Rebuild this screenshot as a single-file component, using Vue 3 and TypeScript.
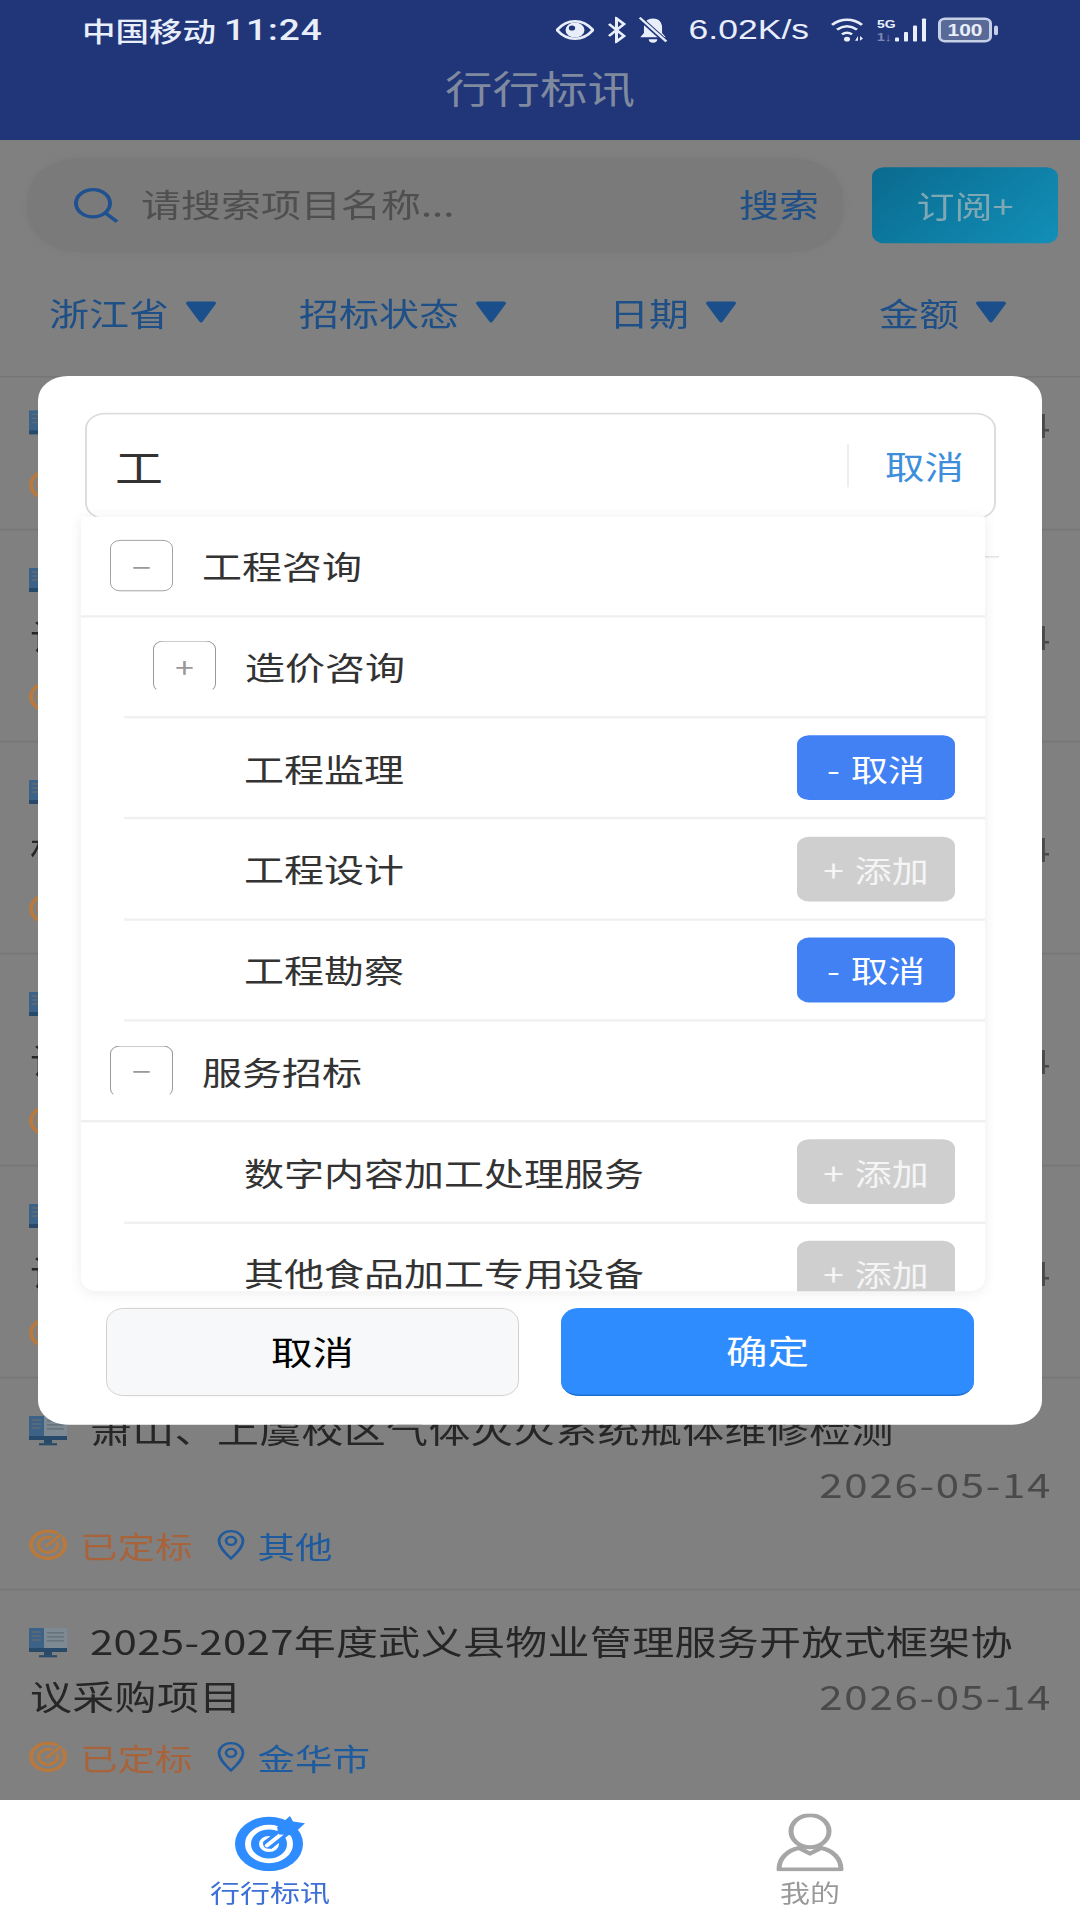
<template>
  <div class="viewport">
    <div class="screen">
      <header class="top">
        <div class="status">
          <span class="carrier">中国移动</span>
          <span class="clock">11:24</span>
          <div class="status-right">
            <svg class="ic-eye" viewBox="0 0 38 25">
              <path d="M1 12.500C7 4 13 1.500 19 1.500S31 4 37 12.500C31 21 25 23.500 19 23.500S7 21 1 12.500Z" fill="none" stroke="#e8eefa" stroke-width="3" />
              <circle cx="19" cy="12.500" r="9.500" fill="#e8eefa" />
              <circle cx="16" cy="10" r="3.200" fill="#213579" />
            </svg>
            <svg class="ic-bt" viewBox="0 0 21 33">
              <path d="M3 9l15 15-7.500 7V2L18 9 3 24" fill="none" stroke="#e8eefa" stroke-width="3" />
            </svg>
            <svg class="ic-bell" viewBox="0 0 28 31">
              <path d="M14 2c6 0 8.500 5 8.500 10v7l3.500 5H2l3.500-5v-7C5.500 7 8 2 14 2Z" fill="#e8eefa" />
              <path d="M10 26.500h8a4 4 0 0 1-8 0Z" fill="#e8eefa" />
              <path d="M2 2l24 27" stroke="#213579" stroke-width="5" />
              <path d="M1.500 1l25 28" stroke="#e8eefa" stroke-width="2.400" />
            </svg>
            <span class="speed">6.02K/s</span>
            <svg class="ic-wifi" viewBox="0 0 36 31">
              <path d="M1 9C10 0.500 22 0.500 31 9" fill="none" stroke="#e8eefa" stroke-width="3" />
              <path d="M6 15c6.500-5.500 13.500-5.500 20 0" fill="none" stroke="#e8eefa" stroke-width="3" />
              <path d="M11 21c3.500-3 6.500-3 10 0" fill="none" stroke="#e8eefa" stroke-width="3" />
              <circle cx="16" cy="27" r="3" fill="#e8eefa" />
              <path d="M24 29l3-6v6Zm5-6l3 3-3 3Z" fill="#e8eefa" />
            </svg>
            <div class="net">
              <span class="net-5g">5G</span>
              <span class="net-dim">1↓</span>
            </div>
            <svg class="ic-bars" viewBox="0 0 32 31">
              <rect x="0" y="25" width="4" height="5" rx="1" fill="#e8eefa" />
              <rect x="9" y="18" width="4" height="12" rx="1" fill="#e8eefa" />
              <rect x="18" y="10" width="4" height="20" rx="1" fill="#e8eefa" />
              <rect x="27" y="1" width="4" height="29" rx="1" fill="#e8eefa" />
            </svg>
            <div class="battery"><span>100</span></div>
            <i class="battery-nub"></i>
          </div>
        </div>
        <h1 class="title">行行标讯</h1>
      </header>

      <div class="search-row">
        <div class="search">
          <svg class="ic-search" viewBox="0 0 46 44">
            <circle cx="20" cy="19" r="17" fill="none" stroke="#1f5090" stroke-width="4" />
            <path d="M32 31l12 11" stroke="#1f5090" stroke-width="4" />
          </svg>
          <span class="placeholder">请搜索项目名称...</span>
          <span class="search-btn">搜索</span>
        </div>
        <div class="subscribe">订阅+</div>
      </div>

      <div class="filters">
        <div v-for="f in filters" :key="f" class="filter">
          <span>{{ f }}</span>
          <svg class="ic-tri" viewBox="0 0 32 28">
            <path d="M3 3h26L16 25Z" fill="#1a4f8c" stroke="#1a4f8c" stroke-width="4" stroke-linejoin="round" />
          </svg>
        </div>
      </div>

      <div class="list">
        <div v-for="(it, i) in items" :key="i" class="item">
          <div class="item-title">
            <svg class="ic-monitor" viewBox="0 0 38 38">
              <rect x="0" y="1" width="38" height="26" rx="1" fill="#7d8a94" />
              <rect x="0" y="1" width="15" height="26" fill="#3d6288" />
              <path d="M3 6h9M3 11h9M3 16h9M18 7h17M18 12h17M18 17h17" stroke="#5f6c76" stroke-width="1.600" />
              <rect x="0" y="26" width="38" height="5" fill="#27496a" />
              <rect x="15" y="31" width="8" height="4" fill="#27496a" />
              <rect x="10" y="35" width="18" height="3" fill="#27496a" />
            </svg>
            <span>{{ it.title }}</span>
            <span class="date">{{ it.date }}</span>
          </div>
          <div class="tags">
            <svg class="ic-target" viewBox="0 0 38 38">
              <circle cx="19" cy="19" r="17" fill="none" stroke="#b9793c" stroke-width="4" />
              <circle cx="19" cy="19" r="9.500" fill="none" stroke="#b9793c" stroke-width="3.400" />
              <path d="M19 19L36 2" stroke="#808080" stroke-width="7" />
              <path d="M17 21L32 6" stroke="#b9793c" stroke-width="3.400" />
            </svg>
            <span class="state">{{ it.state }}</span>
            <svg class="ic-pin" viewBox="0 0 28 38">
              <path d="M14 36C6 27 2 21 2 14a12 12 0 0 1 24 0c0 7-4 13-12 22Z" fill="none" stroke="#1f5a9e" stroke-width="2.800" />
              <circle cx="14" cy="14" r="5" fill="none" stroke="#1f5a9e" stroke-width="2.800" />
            </svg>
            <span class="city">{{ it.city }}</span>
          </div>
        </div>
      </div>

      <nav class="tabs">
        <div class="tab active">
          <svg class="ic-tab" viewBox="0 0 72 72">
            <circle cx="35" cy="38" r="34" fill="#2f8cff" />
            <circle cx="35" cy="38" r="21" fill="none" stroke="#fff" stroke-width="6" />
            <circle cx="35" cy="38" r="8" fill="none" stroke="#fff" stroke-width="4" />
            <path d="M33 40L58 15" stroke="#2f8cff" stroke-width="12" />
            <path d="M33 40L50 23" stroke="#fff" stroke-width="4.500" stroke-linecap="round" />
            <path d="M43 17l13-14 3 7 12 2-13 15-13-1Z" fill="#2f8cff" />
          </svg>
          <span>行行标讯</span>
        </div>
        <div class="tab">
          <svg class="ic-tab" viewBox="0 0 72 72">
            <ellipse cx="36" cy="22" rx="19" ry="20" fill="none" stroke="#a6a6a6" stroke-width="5" />
            <path d="M5 70c0-14 8-24 20-27l11 7 11-7c12 3 20 13 20 27Z" fill="none" stroke="#a6a6a6" stroke-width="5" stroke-linejoin="round" />
          </svg>
          <span>我的</span>
        </div>
      </nav>

      <div class="mask">
        <div class="dialog">
          <div class="input">
            <span class="input-val">工</span>
            <span class="input-cancel">取消</span>
          </div>
          <i class="under-line"></i>
          <div class="panel">
            <div v-for="row in rows" :key="row.name" class="row" :class="row.level === 0 ? 'lv0' : 'lv1'">
              <span v-if="row.toggle" class="toggle" :class="{ open: row.openBottom }">{{ row.toggle }}</span>
              <span v-else class="toggle-gap"></span>
              <span class="row-name">{{ row.name }}</span>
              <span v-if="row.selected !== undefined" class="pick" :class="{ on: row.selected }">
                <b>{{ row.selected ? "-" : "+" }}</b>{{ row.selected ? "取消" : "添加" }}
              </span>
            </div>
          </div>
          <div class="footer">
            <div class="btn cancel">取消</div>
            <div class="btn ok">确定</div>
          </div>
        </div>
      </div>
    </div>
  </div>
</template>

<script setup lang="ts">
interface Item {
  title: string;
  date: string;
  state: string;
  city: string;
}

interface Row {
  name: string;
  level: number;
  toggle?: string;
  openBottom?: boolean;
  selected?: boolean;
}

const filters: string[] = ["浙江省", "招标状态", "日期", "金额"];

const items: Item[] = [
  { title: "校园绿化养护服务采购项目", date: "2026-05-14", state: "已定标", city: "杭州市" },
  { title: "市政道路养护工程勘察设计服务年度框架协议采购设计项目", date: "2026-05-14", state: "已定标", city: "宁波市" },
  { title: "老旧小区改造提升工程造价咨询服务年度框架协议标段采购", date: "2026-05-14", state: "已定标", city: "杭州市" },
  { title: "城市排水管网检测修复工程勘察服务年度框架协议设计项目", date: "2026-05-14", state: "已定标", city: "温州市" },
  { title: "公共建筑节能改造工程监理服务年度采购框架协议设计项目", date: "2026-05-14", state: "已定标", city: "嘉兴市" },
  { title: "萧山、上虞校区气体灭火系统瓶体维修检测", date: "2026-05-14", state: "已定标", city: "其他" },
  { title: "2025-2027年度武义县物业管理服务开放式框架协议采购项目", date: "2026-05-14", state: "已定标", city: "金华市" },
];

const rows: Row[] = [
  { name: "工程咨询", level: 0, toggle: "−" },
  { name: "造价咨询", level: 1, toggle: "+", openBottom: true },
  { name: "工程监理", level: 1, selected: true },
  { name: "工程设计", level: 1, selected: false },
  { name: "工程勘察", level: 1, selected: true },
  { name: "服务招标", level: 0, toggle: "−", openBottom: true },
  { name: "数字内容加工处理服务", level: 1, selected: false },
  { name: "其他食品加工专用设备", level: 1, selected: false },
];
</script>

<style>
html,
body {
  margin: 0;
  overflow: hidden;
}
</style>

<style scoped>
.viewport {
  width: 1080px;
  height: 1920px;
  overflow: hidden;
}

/* the reference is a 1080x2400 capture squeezed to 1920 */
.screen {
  position: relative;
  display: flex;
  flex-direction: column;
  width: 1080px;
  height: 2400px;
  transform: scaleY(0.8);
  transform-origin: top left;
  background: #808080;
  font-family: "Noto Sans CJK SC", "Noto Sans", sans-serif;
  color: #262626;
}

.top {
  height: 175px;
  background: #213579;
}

.status {
  display: flex;
  align-items: center;
  height: 75px;
  padding-left: 82px;
  color: #e8eefa;
}

.carrier {
  font-size: 33.500px;
  font-weight: 500;
}

.clock {
  margin-left: 8px;
  font-size: 37px;
  font-weight: 500;
  font-family: "Roboto", sans-serif;
  letter-spacing: 1px;
}

.status-right {
  display: flex;
  align-items: center;
  margin-left: auto;
  margin-right: 82px;
}

.ic-eye {
  width: 38px;
  height: 25px;
}

.ic-bt {
  width: 21px;
  height: 33px;
  margin-left: 12px;
}

.ic-bell {
  width: 30px;
  height: 33px;
  margin-left: 11px;
}

.speed {
  margin-left: 21px;
  font-family: "Liberation Sans", sans-serif;
  font-size: 35.500px;
}

.ic-wifi {
  width: 36px;
  height: 31px;
  margin-left: 22px;
}

.net {
  display: flex;
  flex-direction: column;
  width: 18px;
  margin-left: 10px;
  font-family: "Liberation Sans", sans-serif;
  font-size: 14px;
  font-weight: 700;
  line-height: 16px;
}

.net-dim {
  opacity: 0.45;
}

.ic-bars {
  width: 32px;
  height: 31px;
}

.battery {
  display: flex;
  align-items: center;
  justify-content: center;
  box-sizing: border-box;
  width: 54px;
  height: 31px;
  margin-left: 11px;
  border: 3px solid #c5cfe6;
  border-radius: 7px;
  background: #5a6a98;
  font-family: "Liberation Sans", sans-serif;
  font-size: 21px;
  font-weight: 700;
}

.battery-nub {
  width: 4px;
  height: 12px;
  margin-left: 2px;
  border-radius: 2px;
  background: #c5cfe6;
}

.title {
  margin: 0;
  line-height: 68px;
  font-size: 47.500px;
  font-weight: 400;
  text-align: center;
  color: #7f8a9f;
}

.search-row {
  display: flex;
  align-items: center;
  padding: 23px 22px 0 28px;
}

.search {
  display: flex;
  flex: 1;
  align-items: center;
  height: 117px;
  padding: 0 24px 0 45px;
  border-radius: 50px;
  background: #7a7a7a;
  box-shadow: 0 0 8px #7a7a7a;
}

.ic-search {
  width: 46px;
  height: 44px;
}

.placeholder {
  flex: 1;
  margin: 0 0 6px 22px;
  font-size: 40px;
  color: #4f4f4f;
}

.search-btn {
  margin-bottom: 6px;
  font-size: 40px;
  color: #1e4f86;
}

.subscribe {
  width: 186px;
  height: 95px;
  margin-left: 29px;
  border-radius: 12px;
  background: linear-gradient(135deg, #0a6a8e, #128fb8);
  font-size: 38px;
  line-height: 93px;
  text-align: center;
  color: #7fa8b5;
}

.filters {
  display: grid;
  grid-template-columns: repeat(4, 270px);
  align-items: center;
  box-sizing: border-box;
  height: 157px;
  padding: 0 0 6px 0;
  border-bottom: 2px solid #767676;
  color: #1e4f86;
  font-size: 40px;
}

.filter {
  display: flex;
  align-items: center;
  justify-content: center;
  margin-left: -4px;
}

.ic-tri {
  width: 32px;
  height: 28px;
  margin-left: 16px;
}

.list {
  flex: 1;
  overflow: hidden;
}

.item {
  box-sizing: border-box;
  padding: 29px 40px 35px 30px;
  border-bottom: 2px solid #767676;
}

.item:first-child {
  margin-top: -6px;
}

.item-title {
  display: flow-root;
  font-size: 42px;
  line-height: 68px;
  letter-spacing: 0.3px;
}

.ic-monitor {
  display: inline-block;
  width: 38px;
  height: 38px;
  margin: 0 23px 0 -1px;
  vertical-align: -3px;
}

.date {
  float: right;
  margin-right: -12px;
  font-size: 42px;
  letter-spacing: 1.700px;
  color: #4a4a4a;
}

.tags {
  display: flex;
  align-items: center;
  height: 40px;
  margin-top: 23px;
  font-size: 37.500px;
}

.ic-target {
  width: 38px;
  height: 38px;
  margin-left: -1px;
}

.state {
  margin-left: 13px;
  color: #a9633a;
}

.ic-pin {
  width: 28px;
  height: 38px;
  margin-left: 24px;
}

.city {
  margin-left: 13px;
  color: #1d5a9e;
}

.tabs {
  position: relative;
  z-index: 2;
  display: grid;
  grid-template-columns: 1fr 1fr;
  height: 150px;
  background: #fff;
}

.tab {
  display: flex;
  flex-direction: column;
  align-items: center;
  padding-top: 17px;
  font-size: 30px;
  line-height: 44px;
  color: #999;
}

.tab.active {
  color: #3d6fd6;
}

.ic-tab {
  width: 72px;
  height: 72px;
  margin-bottom: 4px;
}

/* over the list, centred on everything above the tab bar */
.mask {
  position: absolute;
  top: 0;
  left: 0;
  right: 0;
  bottom: 150px;
  display: flex;
  align-items: center;
  justify-content: center;
}

.dialog {
  position: relative;
  box-sizing: border-box;
  width: 1004px;
  height: 1311px;
  padding: 46px 47px 0;
  border-radius: 30px;
  background: #fff;
}

.input {
  display: flex;
  align-items: center;
  box-sizing: border-box;
  width: 911px;
  height: 133px;
  padding: 0 30px 0 28px;
  border: 2px solid #ddd;
  border-radius: 20px;
}

.input-val {
  flex: 1;
  font-size: 48px;
  color: #333;
}

.input-cancel {
  padding-left: 36px;
  border-left: 2px solid #eee;
  font-size: 39.500px;
  line-height: 54px;
  color: #3f8edb;
}

.under-line {
  position: absolute;
  top: 225px;
  left: 947px;
  width: 14px;
  height: 2px;
  background: #e5e5e5;
}

.panel {
  position: relative;
  width: 904px;
  height: 968px;
  margin: -3px 0 0 -4px;
  overflow: hidden;
  border-radius: 0 0 16px 16px;
  background: #fff;
  box-shadow: 0 2px 14px rgba(0, 0, 0, 0.08);
}

.row {
  display: flex;
  align-items: center;
  box-sizing: border-box;
  height: 126.300px;
  padding-right: 30px;
  border-bottom: 3px solid #f0f0f0;
  font-size: 40px;
  color: #333;
}

.row.lv0 {
  padding-left: 29px;
}

.row.lv1 {
  margin-left: 43px;
  padding-left: 29px;
}

.toggle,
.toggle-gap {
  flex: none;
  box-sizing: border-box;
  width: 63px;
  height: 64px;
  margin-right: 29px;
}

.toggle-gap {
  margin-right: 28px;
}

.toggle {
  display: flex;
  align-items: center;
  justify-content: center;
  border: 1.500px solid #999;
  border-radius: 10px;
  font-size: 34px;
  color: #999;
}

.toggle.open {
  border-bottom-color: #fff;
}

.row-name {
  flex: 1;
}

.pick {
  display: flex;
  align-items: center;
  justify-content: center;
  width: 158px;
  height: 81px;
  border-radius: 12px;
  background: #cfcfcf;
  font-size: 37px;
  color: #f5f5f5;
}

.pick b {
  margin-right: 11px;
  font-weight: 400;
}

.pick.on {
  background: #4281f3;
  color: #fff;
}

.footer {
  display: flex;
  justify-content: space-between;
  margin: 21px 21px 0 21px;
}

.btn {
  box-sizing: border-box;
  width: 413px;
  height: 110px;
  border-radius: 18px;
  font-size: 41.500px;
  line-height: 104px;
  text-align: center;
}

.cancel {
  border: 1.500px solid #ccc;
  background: #f7f8fa;
  color: #000;
}

.ok {
  border-bottom: 2px solid #1f6fd0;
  background: #2f8cff;
  color: #fff;
}
</style>
